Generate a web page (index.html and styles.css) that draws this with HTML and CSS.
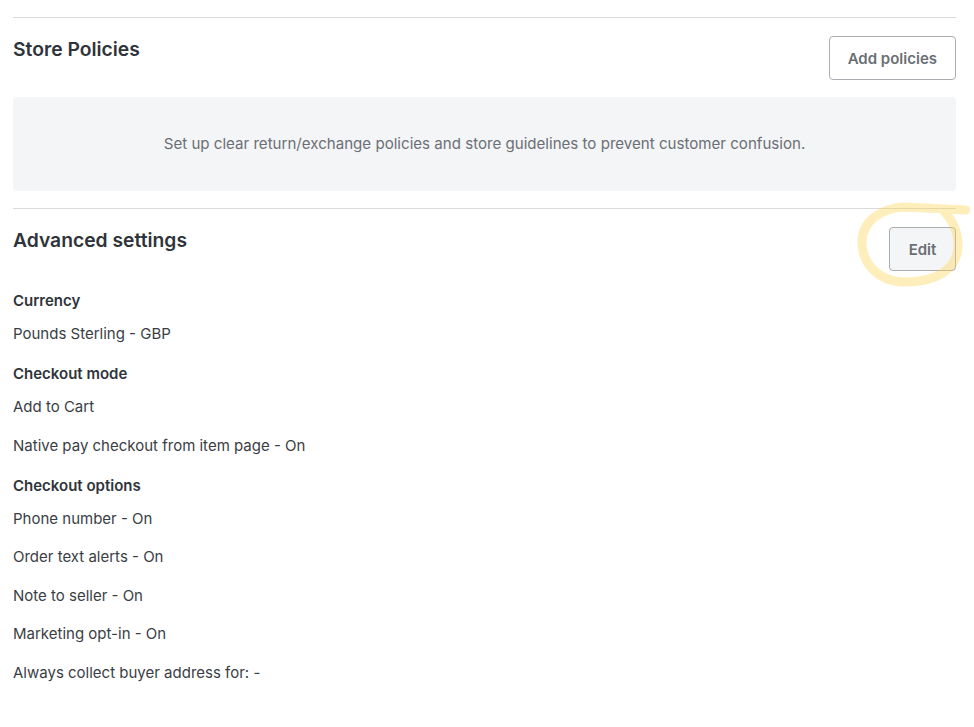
FILE: index.html
```html
<!DOCTYPE html>
<html lang="en">
<head>
    <title>Store settings</title>
    <meta charset="UTF-8">
    <meta name="viewport" content="width=device-width, initial-scale=1.0">
    <link rel="stylesheet" href="styles.css">
</head>
<body>
    <div class="pagina">
        <section class="seccion">
            <div class="cabecera">
                <h2>Store Policies</h2>
                <button class="boton">Add policies</button>
            </div>
            <div class="vacio">Set up clear return/exchange policies and store guidelines to prevent customer confusion.</div>
        </section>
        <section class="seccion">
            <div class="cabecera">
                <h2>Advanced settings</h2>
                <div class="marca">
                    <button class="boton boton-gris">Edit</button>
                    <svg class="circulo" width="120" height="100" viewBox="850 195 120 100">
                        <path d="M 966 210 L 905 207 C 880 208 862 222 862 242 C 862 265 880 282 905 282 C 935 282 958 270 958 245 C 958 228 950 218 943 210" fill="none" stroke="#fcd34d" stroke-opacity="0.38" stroke-width="9" stroke-linecap="round"/>
                    </svg>
                </div>
            </div>
            <div class="ajustes">
                <div class="grupo">
                    <h3>Currency</h3>
                    <p>Pounds Sterling - GBP</p>
                </div>
                <div class="grupo">
                    <h3>Checkout mode</h3>
                    <p>Add to Cart</p>
                    <p>Native pay checkout from item page - On</p>
                </div>
                <div class="grupo">
                    <h3>Checkout options</h3>
                    <p>Phone number - On</p>
                    <p>Order text alerts - On</p>
                    <p>Note to seller - On</p>
                    <p>Marketing opt-in - On</p>
                    <p>Always collect buyer address for: -</p>
                </div>
            </div>
        </section>
    </div>
</body>
</html>
```

FILE: styles.css
```css
body {
    margin: 0;
    background-color: #fff;
    font-family: "Inter", "Liberation Sans", sans-serif;
    color: #3a3e44;
}

.pagina {
    padding: 17px 18px 0 13px;
}

.seccion {
    border-top: 1px solid #d9dadc;
}

.cabecera {
    display: flex;
    justify-content: space-between;
    align-items: flex-start;
    padding-top: 18px;
}

.cabecera h2 {
    margin: 0;
    padding-top: 1px;
    font-size: 19.3px;
    font-weight: 600;
    color: #2f343a;
}

.boton {
    height: 44px;
    padding: 0 18px;
    font-family: "Inter", "Liberation Sans", sans-serif;
    font-size: 15px;
    font-weight: 600;
    color: #6a6e74;
    background-color: #fff;
    border: 1px solid #a9acb0;
    border-radius: 4px;
}

.boton-gris {
    width: 67px;
    padding: 0;
    background-color: #f4f5f7;
}

.marca {
    position: relative;
}

.circulo {
    position: absolute;
    left: -39px;
    top: -32px;
    pointer-events: none;
}

.vacio {
    margin: 17px 0;
    height: 94px;
    padding-bottom: 2px;
    box-sizing: border-box;
    display: flex;
    justify-content: center;
    align-items: center;
    background-color: #f4f5f7;
    border-radius: 4px;
    font-size: 15.1px;
    color: #6b6f75;
}

.ajustes {
    padding-top: 20px;
}

.grupo {
    margin-bottom: 3px;
}

.ajustes h3 {
    margin: 0;
    height: 33px;
    font-size: 15px;
    font-weight: 600;
    color: #2f343a;
}

.ajustes p {
    margin: 0;
    height: 38.5px;
    font-size: 15px;
}

.grupo p:last-child {
    height: 37px;
}
```
